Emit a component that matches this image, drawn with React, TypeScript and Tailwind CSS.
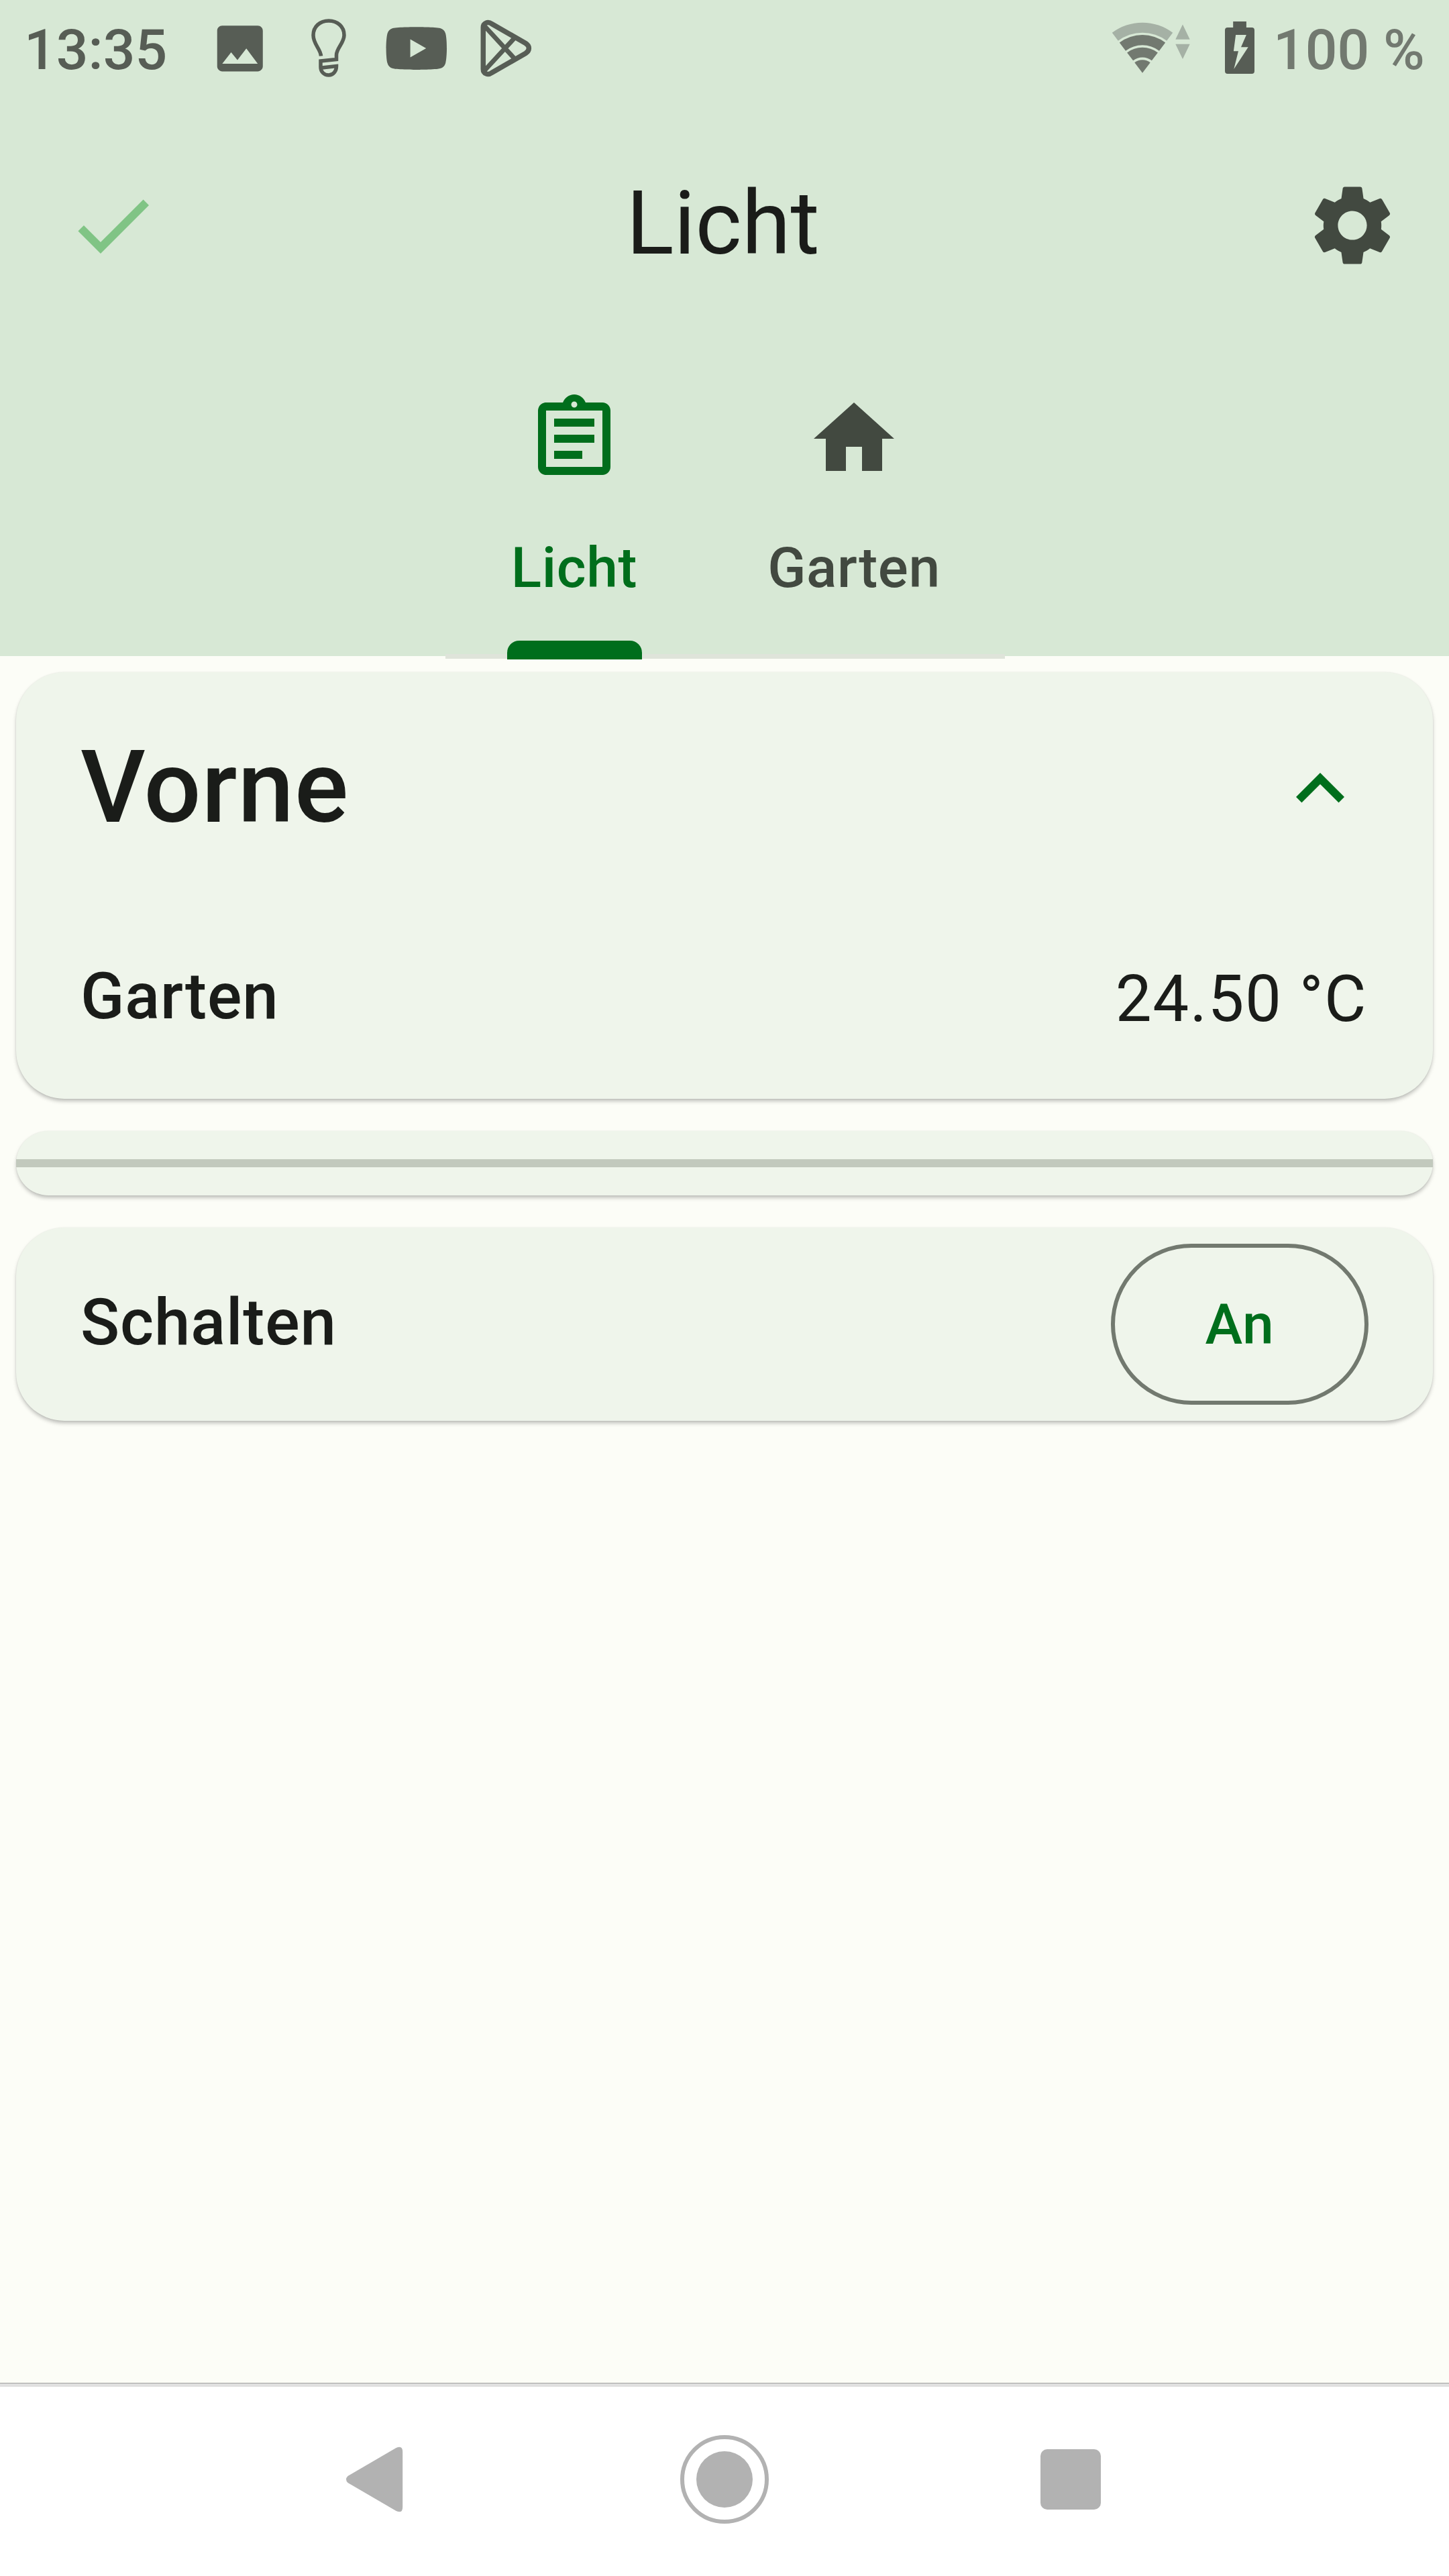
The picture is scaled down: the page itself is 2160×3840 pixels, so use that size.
import type { ReactNode } from "react";
import { MdCheck, MdExpandLess, MdHome, MdOutlineAssignment, MdSettings } from "react-icons/md";

function StatusBar() {
  return (
    <div className="flex h-[144px] justify-between">
      <div className="flex">
        <span className="mt-[3px] w-[300px] pl-[36px] text-[84px] leading-[144px] font-medium text-[#575d55]">13:35</span>
        <svg className="h-[144px] w-[120px]" viewBox="300 0 120 144" fill="#575d55">
          <path
            transform="translate(312.4 27) scale(3.78)"
            d="M21 19V5c0-1.1-.9-2-2-2H5c-1.1 0-2 .9-2 2v14c0 1.1.9 2 2 2h14c1.1 0 2-.9 2-2zM8.5 13.5l2.5 3.01L14.5 12l4.5 6H5l3.5-4.5z"
          />
        </svg>
        <svg className="h-[144px] w-[120px]" viewBox="420 0 120 144" fill="none" stroke="#575d55" strokeWidth="5.5">
          <path d="M478.500 83.500C478 73 467 66 467 52.500C467 39.500 477 31 490 31S513 39.500 513 52.500C513 64 501.500 72 501.500 82V88.500L478 91V100C478 107 483 112 490 112S501.500 106 501.500 98.500L480 101" />
        </svg>
        <svg className="h-[144px] w-[160px]" viewBox="540 0 160 144" fill="#575d55">
          <path
            transform="translate(575.600 26.800) scale(3.770)"
            d="M23.498 6.186a3.016 3.016 0 0 0-2.122-2.136C19.505 3.545 12 3.545 12 3.545s-7.505 0-9.377.505A3.017 3.017 0 0 0 .502 6.186C0 8.07 0 12 0 12s0 3.93.502 5.814a3.016 3.016 0 0 0 2.122 2.136c1.871.505 9.376.505 9.376.505s7.505 0 9.377-.505a3.015 3.015 0 0 0 2.122-2.136C24 15.93 24 12 24 12s0-3.93-.502-5.814zM9.545 15.568V8.432L15.818 12l-6.273 3.568z"
          />
        </svg>
        <svg className="h-[144px] w-[120px]" viewBox="700 0 120 144" fill="none" stroke="#575d55" strokeWidth="7.5">
          <path d="M720.300 41C720.300 34 727.500 31.500 733 35.500L783.500 64.500C790 68.500 790 75.500 783.500 79.500L733 108.500C727.500 112.500 720.300 110 720.300 103Z" />
          <path d="M721.500 38L768 88.500M721.500 106L768 55.500" strokeWidth="7" />
        </svg>
      </div>
      <div className="flex">
        <svg className="h-[144px] w-[160px]" viewBox="1640 0 160 144" fill="#727970">
          <g transform="translate(1703 108.700)">
            <path fill="#a5b1a5" d="M-45.200-59.850A75 75 0 0 1 45.200-59.850L36.200-47.900A60 60 0 0 0-36.200-47.900Z" />
            <path d="M-34.200-45.200A56.700 56.700 0 0 1 34.200-45.200L25-33A41.400 41.400 0 0 0-25-33Z" />
            <path d="M-22.900-30.300A38 38 0 0 1 22.900-30.300L13.900-18.400A23 23 0 0 0-13.900-18.400Z" />
            <path d="M-11.700-15.500A19.400 19.400 0 0 1 11.700-15.500L0 0Z" />
          </g>
          <path fill="#a5b1a5" d="M1763 36.500L1773.700 58.700H1752.300ZM1763 88L1752.300 65.700H1773.700Z" />
        </svg>
        <svg className="h-[144px] w-[96px]" viewBox="1800 0 96 144" fill="#575d55">
          <path
            fillRule="evenodd"
            d="M1838.200 32H1857.900V41H1866Q1870 41 1870 45V106Q1870 110 1866 110H1830Q1826 110 1826 106V45Q1826 41 1830 41H1838.200ZM1842.100 52L1838.900 76.300H1846L1839.300 103L1860.700 70.300H1850L1857.900 52Z"
          />
        </svg>
        <span className="mt-[3px] w-[264px] pl-[2px] text-[84px] leading-[144px] font-medium whitespace-nowrap text-[#727970]">100 %</span>
      </div>
    </div>
  );
}

function AppBar() {
  return (
    <div className="flex h-[384px] items-center justify-between pr-[72px] pl-[96px]">
      <MdCheck className="size-[144px] text-[#80c485]" />
      <h1 className="-mt-[7px] mr-[29px] text-[132px] leading-[168px] font-normal text-[#1a1c19]">Licht</h1>
      <MdSettings className="size-[144px] text-[#424940]" />
    </div>
  );
}

function Tab({ label, icon, active }: { label: string; icon: ReactNode; active?: boolean }) {
  return (
    <div className={active ? "flex w-[416px] flex-col items-center text-[#006e1c]" : "flex w-[418px] flex-col items-center text-[#424940]"}>
      {icon}
      <span className="mt-[61px] shrink-0 text-[84px] leading-[120px] font-medium tracking-[0.6px]">{label}</span>
      {active && <span className="relative mt-[48px] h-[28px] w-[201px] shrink-0 rounded-t-[18px] bg-[#006e1c]" />}
    </div>
  );
}

function Tabs() {
  return (
    <div className="relative flex h-[450px] pt-[54px] pl-[648px]">
      <div className="absolute top-[447px] left-[664px] h-[7px] w-[834px] bg-[#dfe4da]" />
      <Tab active label="Licht" icon={<MdOutlineAssignment className="size-[144px] shrink-0" />} />
      <Tab label="Garten" icon={<MdHome className="size-[144px] shrink-0" />} />
    </div>
  );
}

function Card({ className, children }: { className: string; children: ReactNode }) {
  return (
    <section className={`bg-[#eff5eb] shadow-[0_4px_6px_-1px_rgba(0,0,0,0.28),0_0_2px_rgba(0,0,0,0.08)] ${className}`}>
      {children}
    </section>
  );
}

function NavBar() {
  return (
    <nav className="flex h-[288px] flex-col bg-white">
      <div className="h-[6px] border-t border-[#a0a0a0] bg-[#e0e0e0]" />
      <div className="flex h-[276px] items-center justify-between pr-[504px] pl-[504px]">
        <svg className="h-[120px] w-[105px]" viewBox="504 3636 105 120" fill="#b2b2b2">
          <path d="M518.500 3691L590.500 3649Q600.200 3644.500 600.200 3655V3737Q600.200 3747.500 590.500 3743L518.500 3701Q513.500 3696 518.500 3691Z" />
        </svg>
        <div className="flex size-[132px] items-center justify-center rounded-full border-6 border-[#b2b2b2]">
          <div className="size-[84px] rounded-full bg-[#b2b2b2]" />
        </div>
        <div className="mr-[15px] size-[90px] rounded-[10px] bg-[#b2b2b2]" />
      </div>
    </nav>
  );
}

export default function App() {
  return (
    <div className="flex h-[3840px] w-[2160px] flex-col overflow-hidden bg-[#fcfdf7] font-[Roboto,sans-serif] text-[#1a1c19]">
      <header className="h-[978px] shrink-0 bg-[#d7e8d5]">
        <StatusBar />
        <AppBar />
        <Tabs />
      </header>
      <main className="flex flex-1 flex-col gap-[48px] px-[24px] pt-[24px]">
        <Card className="h-[636px] rounded-[72px] px-[96px]">
          <div className="flex h-[348px] items-center justify-between">
            <h2 className="-mt-[5px] text-[150px] leading-[180px] font-medium tracking-[1px]">Vorne</h2>
            <MdExpandLess className="size-[144px] text-[#006e1c]" />
          </div>
          <div className="flex h-[276px] items-center justify-between">
            <span className="-mt-[6px] text-[96px] leading-[120px] font-medium tracking-[0.9px]">Garten</span>
            <span className="mt-[2px] mr-[2px] text-[96px] leading-[120px] tracking-[1.5px]">24.50 °C</span>
          </div>
        </Card>
        <Card className="flex h-[96px] items-center rounded-[48px]">
          <div className="h-[12px] w-full bg-[#c2c9bd]" />
        </Card>
        <Card className="flex h-[288px] items-center justify-between rounded-[72px] px-[96px]">
          <span className="-mt-[6px] text-[96px] leading-[120px] font-medium tracking-[0.9px]">Schalten</span>
          <button className="h-[240px] w-[384px] rounded-full border-6 border-[#72796f] pt-[2px] text-[84px] font-medium tracking-[0.6px] text-[#006e1c]">An</button>
        </Card>
      </main>
      <NavBar />
    </div>
  );
}
